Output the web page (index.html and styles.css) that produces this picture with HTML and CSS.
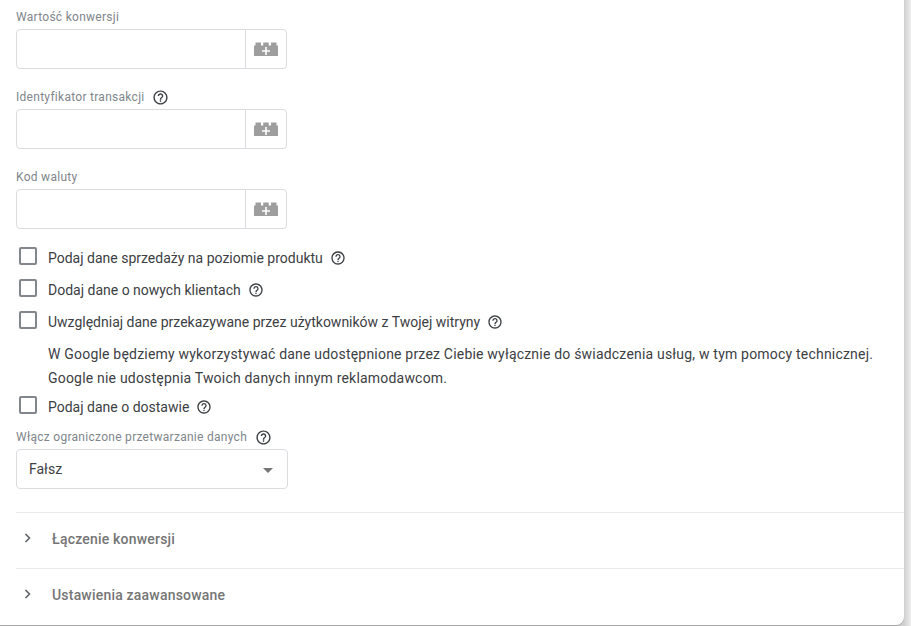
FILE: index.html
```html
<!DOCTYPE html>
<html lang="pl">
<head>
<meta charset="utf-8">
<title>Konwersja</title>
<link rel="stylesheet" href="styles.css">
</head>
<body>
<svg class="defs" width="0" height="0" aria-hidden="true">
  <symbol id="help" viewBox="0 0 24 24"><path d="M11 18h2v-2h-2v2zm1-16C6.48 2 2 6.48 2 12s4.48 10 10 10 10-4.48 10-10S17.52 2 12 2zm0 18c-4.41 0-8-3.59-8-8s3.59-8 8-8 8 3.59 8 8-3.59 8-8 8zm0-14c-2.21 0-4 1.790-4 4h2c0-1.100.9-2 2-2s2 .9 2 2c0 2-3 1.750-3 5h2c0-2.250 3-2.500 3-5 0-2.210-1.790-4-4-4z"/></symbol>
  <symbol id="brick" viewBox="0 0 24 14"><path fill-rule="evenodd" d="M0 3.500h1.500V.5H7v3h2.250V.5h5.500v3H17V.5h5.500v3H24V14H0zM11.200 5v3.200H8v1.600h3.200V13h1.600V9.800H16V8.200h-3.200V5z"/></symbol>
</svg>
<main class="card">
  <div class="fields">
    <div class="field">
      <div class="label">Wartość konwersji</div>
      <div class="input"><div class="input-box"></div><div class="var-btn"><svg class="brick"><use href="#brick"/></svg></div></div>
    </div>
    <div class="field">
      <div class="label">Identyfikator transakcji <svg class="help"><use href="#help"/></svg></div>
      <div class="input"><div class="input-box"></div><div class="var-btn"><svg class="brick"><use href="#brick"/></svg></div></div>
    </div>
    <div class="field">
      <div class="label">Kod waluty</div>
      <div class="input"><div class="input-box"></div><div class="var-btn"><svg class="brick"><use href="#brick"/></svg></div></div>
    </div>
  </div>
  <div class="checks">
    <div class="check"><span class="box"></span><span>Podaj dane sprzedaży na poziomie produktu</span><svg class="help"><use href="#help"/></svg></div>
    <div class="check"><span class="box"></span><span>Dodaj dane o nowych klientach</span><svg class="help"><use href="#help"/></svg></div>
    <div class="check"><span class="box"></span><span>Uwzględniaj dane przekazywane przez użytkowników z Twojej witryny</span><svg class="help"><use href="#help"/></svg></div>
    <p class="note">W Google będziemy wykorzystywać dane udostępnione przez Ciebie wyłącznie do świadczenia usług, w tym pomocy technicznej. Google nie udostępnia Twoich danych innym reklamodawcom.</p>
    <div class="check"><span class="box"></span><span>Podaj dane o dostawie</span><svg class="help"><use href="#help"/></svg></div>
  </div>
  <div class="select-field">
    <div class="label">Włącz ograniczone przetwarzanie danych <svg class="help"><use href="#help"/></svg></div>
    <div class="select"><span>Fałsz</span><span class="caret"></span></div>
  </div>
  <div class="section"><svg class="chev" viewBox="0 0 8 12"><path d="M1.500 2 5.500 6l-4 4" /></svg><span>Łączenie konwersji</span></div>
  <div class="section"><svg class="chev" viewBox="0 0 8 12"><path d="M1.500 2 5.500 6l-4 4" /></svg><span>Ustawienia zaawansowane</span></div>
</main>
</body>
</html>
```
FILE: styles.css
```css
* { box-sizing: border-box; }
html, body { margin: 0; height: 100%; overflow: hidden; }
body {
  background: linear-gradient(to right, #cfcfcf 904px, #eeeeee 911px);
  font-family: Roboto, "Liberation Sans", sans-serif;
  font-size: 14px;
  color: #3c4043;
}
.defs { position: absolute; }
.card {
  width: 904px;
  height: 625px;
  background: #fff;
  border-bottom-right-radius: 8px;
  box-shadow: 0 1px 0 #a8a8a8;
  padding-left: 16px;
  overflow: hidden;
}
.fields { display: flex; flex-direction: column; gap: 20px; padding-top: 9px; }
.label {
  display: flex;
  align-items: center;
  height: 16px;
  margin-bottom: 4px;
  font-size: 12px;
  letter-spacing: 0.28px;
  color: #80868b;
}
.help { width: 17px; height: 17px; margin-left: 8px; fill: #3c4043; flex: none; }
.input {
  display: flex;
  width: 271px;
  height: 40px;
  border: 1px solid #dadce0;
  border-radius: 4px;
}
.input-box { flex: 1; }
.var-btn {
  width: 41px;
  border-left: 1px solid #dadce0;
  display: flex;
  align-items: center;
  justify-content: center;
}
.brick { width: 24px; height: 14px; fill: #9e9e9e; }
.checks { padding-top: 13px; }
.check { display: flex; align-items: center; height: 32px; color: #3c4043; }
.box {
  width: 18px;
  height: 18px;
  margin: -4px 11px 0 3px;
  border: 2px solid #80868b;
  border-radius: 2px;
  flex: none;
}
.check .help { width: 16px; height: 16px; margin-left: 7px; }
.note { margin: 4px 0 1px 32px; line-height: 24px; width: 850px; letter-spacing: 0.2px; }
.select-field { padding-top: 6px; }
.select {
  display: flex;
  align-items: center;
  justify-content: space-between;
  width: 272px;
  height: 40px;
  margin-bottom: 23px;
  padding: 0 14px 0 12px;
  border: 1px solid #dadce0;
  border-radius: 4px;
  color: #3c4043;
}
.caret {
  border-left: 5px solid transparent;
  border-right: 5px solid transparent;
  border-top: 5px solid #757575;
  margin-top: 2px;
}
.section {
  display: flex;
  align-items: center;
  height: 56px;
  padding-bottom: 4px;
  border-top: 1px solid #e8eaed;
  font-weight: 500;
  letter-spacing: 0.2px;
  color: #757575;
}
.chev {
  width: 8px;
  height: 12px;
  margin: -2px 20px 0 8px;
  fill: none;
  stroke: #5f6368;
  stroke-width: 1.6;
}
```
